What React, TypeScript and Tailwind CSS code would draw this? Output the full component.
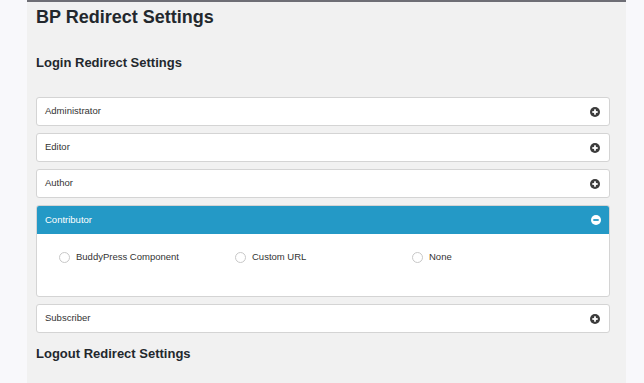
import React from "react";

function PlusIcon({ minus = false, light = false }: { minus?: boolean; light?: boolean }) {
  const bg = light ? "#ffffff" : "#3c3c3c";
  const fg = light ? "#2499c6" : "#ffffff";
  return (
    <svg width="10" height="10" viewBox="0 0 10 10">
      <circle cx="5" cy="5" r="5" fill={bg} />
      <rect x="2.3" y="4.1" width="5.4" height="1.8" fill={fg} />
      {!minus && <rect x="4.1" y="2.3" width="1.8" height="5.4" fill={fg} />}
    </svg>
  );
}

function Row({ label }: { label: string }) {
  return (
    <div className="flex h-[29px] items-center justify-between rounded-[3px] border border-[#d4d4d4] bg-white pl-[8px] pr-[9px]">
      <span className="text-[9.5px] text-[#333]">{label}</span>
      <PlusIcon />
    </div>
  );
}

function Radio({ label }: { label: string }) {
  return (
    <div className="flex items-center gap-[6px]">
      <span className="block h-[11px] w-[11px] rounded-full border border-[#c8c8c8] bg-white" />
      <span className="text-[9.5px] text-[#333]">{label}</span>
    </div>
  );
}

export default function App() {
  return (
    <div
      className="flex h-[383px] w-[644px] bg-[#f8f8fb]"
      style={{ fontFamily: '"Liberation Sans", Arial, sans-serif' }}
    >
      <div className="w-[27px] shrink-0" />
      <div className="flex w-[599px] shrink-0 flex-col bg-[#f1f1f1]">
        <div className="h-[2px] bg-[#6e6e75]" />
        <div className="pl-[9px] pr-[16px]">
          <h1 className="mt-[3px] text-[18px] font-bold leading-[24px] text-[#23282d]">BP Redirect Settings</h1>
          <h2 className="mt-[26px] text-[13px] font-bold leading-[16px] text-[#23282d]">Login Redirect Settings</h2>
          <div className="mt-[26px] flex flex-col gap-[7px]">
            <Row label="Administrator" />
            <Row label="Editor" />
            <Row label="Author" />
            <div className="rounded-[3px] border border-[#d4d4d4] bg-white">
              <div className="flex h-[28px] items-center justify-between rounded-t-[2px] bg-[#2499c6] pl-[8px] pr-[8px]">
                <span className="text-[9.5px] text-white">Contributor</span>
                <PlusIcon minus light />
              </div>
              <div className="flex h-[62px] items-start pl-[22px] pt-[16px]">
                <div className="w-[176px]">
                  <Radio label="BuddyPress Component" />
                </div>
                <div className="w-[177px]">
                  <Radio label="Custom URL" />
                </div>
                <Radio label="None" />
              </div>
            </div>
            <Row label="Subscriber" />
          </div>
          <h2 className="mt-[13px] text-[13px] font-bold leading-[16px] text-[#23282d]">Logout Redirect Settings</h2>
        </div>
      </div>
    </div>
  );
}
